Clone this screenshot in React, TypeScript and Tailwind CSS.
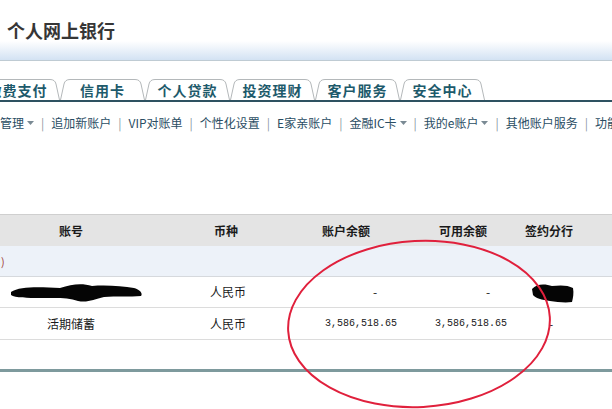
import React from "react";

const cjk = { fontFamily: '"Noto Sans CJK SC", "Liberation Sans", sans-serif' };

const tabs = ["缴费支付", "信用卡", "个人贷款", "投资理财", "客户服务", "安全中心"];

const subNav = [
  { label: "管理", arrow: true },
  { label: "追加新账户" },
  { label: "VIP对账单" },
  { label: "个性化设置" },
  { label: "E家亲账户" },
  { label: "金融IC卡", arrow: true },
  { label: "我的e账户", arrow: true },
  { label: "其他账户服务" },
  { label: "功能" },
];

function Tab({ label }: { label: string }) {
  return (
    <div className="relative flex h-[21px] w-[85px] shrink-0 items-center justify-center">
      <svg className="absolute inset-0" width="85" height="21" viewBox="0 0 85 21">
        <path
          d="M0.5,21 L4,5 Q5,0.5 10,0.5 L75,0.5 Q80,0.5 81,5 L84.5,21"
          fill="#ffffff"
          stroke="#b4b8ba"
          strokeWidth="1"
        />
      </svg>
      <span className="relative text-[14px] font-bold leading-none tracking-[1px] text-[#1d5a6b]">
        {label}
      </span>
    </div>
  );
}

function Arrow() {
  return (
    <svg width="7" height="4" viewBox="0 0 7 4" className="ml-[3px]">
      <path d="M0,0 L7,0 L3.5,4 Z" fill="#7a8a94" />
    </svg>
  );
}

function Scribble({ w, h, d }: { w: number; h: number; d: string }) {
  return (
    <svg width={w} height={h} viewBox={`0 0 ${w} ${h}`}>
      <path d={d} fill="#050505" />
    </svg>
  );
}

const mono = { fontFamily: '"Liberation Mono", monospace' };

export default function App() {
  return (
    <div className="relative h-[409px] w-[612px] overflow-hidden bg-white" style={cjk}>
      {/* title */}
      <div className="flex h-[41px] items-center pl-[7px] pt-[18px]">
        <span className="text-[18px] font-bold leading-none text-[#363636]">个人网上银行</span>
      </div>
      <div className="h-[20px] border-b border-[#bfcbd3] bg-gradient-to-b from-white to-[#d3e2f3]" />

      {/* tabs */}
      <div className="mt-[18px] border-b-2 border-[#2e5261]">
        <div className="-ml-[25px] flex">
          {tabs.map((t) => (
            <Tab key={t} label={t} />
          ))}
        </div>
      </div>

      {/* sub nav */}
      <div className="mt-[15px] flex items-center whitespace-nowrap text-[12px] leading-none text-[#2a4d63]">
        {subNav.map((item, i) => (
          <React.Fragment key={item.label}>
            <span className="flex items-center">
              {item.label}
              {item.arrow && <Arrow />}
            </span>
            {i < subNav.length - 1 && <span className="mx-[7px] text-[#8a98a2]">|</span>}
          </React.Fragment>
        ))}
      </div>

      {/* table */}
      <div className="mt-[85px] text-[12px] text-[#1a1a1a]">
        <div className="grid h-[32px] grid-cols-[143px_157px_120px_90px_1fr] items-center border-t border-[#cfcfcf] bg-[#e4e4e4] font-bold">
          <div className="pl-[59px]">账号</div>
          <div className="pl-[71px]">币种</div>
          <div className="pl-[22px]">账户余额</div>
          <div className="pl-[19px]">可用余额</div>
          <div className="pl-[15px]">签约分行</div>
        </div>
        <div className="flex h-[31px] items-center border-b border-[#d6d9dd] bg-[#edf2f9] pl-[1px] text-[11px] text-[#a0403a]">
          )
        </div>
        <div className="grid h-[31px] grid-cols-[143px_157px_120px_90px_1fr] items-center border-b border-[#dcdcdc]">
          <div className="pl-[10px] pt-[2px]">
            <Scribble
              w={132}
              h={20}
              d="M1,9 C10,3 30,4 50,5 C62,1 72,0 82,3 C96,2 112,3 124,5 C130,7 133,10 131,13 C120,14 106,13 94,14 C84,16 78,20 68,18 C58,14 44,15 30,15 C18,15 5,15 1,12 Z"
            />
          </div>
          <div className="pl-[67px]">人民币</div>
          <div className="pl-[73px]">-</div>
          <div className="pl-[66px]">-</div>
          <div className="pl-[22px] pt-[2px]">
            <Scribble
              w={42}
              h={20}
              d="M0,6 C5,0 14,1 20,3 C28,2 36,2 41,5 C42,10 41,15 40,19 C33,20 25,19 18,18 C10,17 3,15 1,12 Z"
            />
          </div>
        </div>
        <div className="grid h-[32px] grid-cols-[143px_157px_120px_90px_1fr] items-center border-b border-[#dcdcdc]">
          <div className="pl-[47px]">活期储蓄</div>
          <div className="pl-[67px]">人民币</div>
          <div className="pl-[25px] text-[10px]" style={mono}>
            3,586,518.65
          </div>
          <div className="pl-[15px] text-[10px]" style={mono}>
            3,586,518.65
          </div>
          <div className="pl-[39px]">-</div>
        </div>
        <div className="mt-[29px] h-[3px] bg-[#7e9a9d]" />
      </div>

      {/* red hand-drawn circle */}
      <svg className="pointer-events-none absolute left-0 top-0" width="612" height="409">
        <ellipse cx="419" cy="324" rx="131" ry="83" fill="none" stroke="#e0203c" strokeWidth="2" transform="rotate(-3 419 324)" />
      </svg>
    </div>
  );
}
